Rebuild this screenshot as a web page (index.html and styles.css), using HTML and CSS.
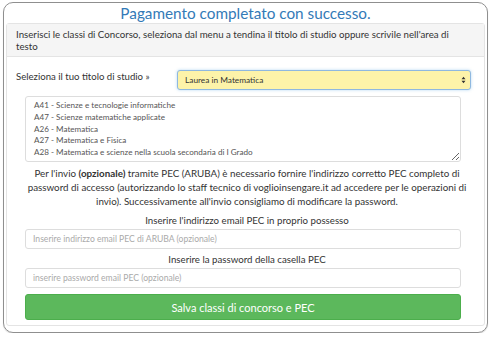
FILE: index.html
```html
<!DOCTYPE html>
<html lang="it">
<head>
  <meta charset="UTF-8" />
  <title>Pagamento completato</title>
  <link rel="stylesheet" href="styles.css">
</head>
<body>
  <div class="frame">
    <h2 class="title">Pagamento completato con successo.</h2>

    <div class="panel">
      <div class="panel-heading">
        Inserisci le classi di Concorso, seleziona dal menu a tendina il titolo di studio oppure scrivile nell'area di testo
      </div>

      <div class="panel-body">
        <div class="select-row">
          <label class="select-label">Seleziona il tuo titolo di studio &raquo;</label>
          <div class="select-box">
            <span>Laurea in Matematica</span>
            <svg class="arrows" width="5" height="8" viewBox="0 0 5 8">
              <path d="M0.5 3.2 L2.5 0.8 L4.5 3.2 Z M0.5 4.8 L2.5 7.2 L4.5 4.8 Z" fill="#333"/>
            </svg>
          </div>
        </div>

        <div class="form-block">
          <textarea class="classes">A41 - Scienze e tecnologie informatiche
A47 - Scienze matematiche applicate
A26 - Matematica
A27 - Matematica e Fisica
A28 - Matematica e scienze nella scuola secondaria di I Grado</textarea>

          <p class="note">
            Per l'invio <b>(opzionale)</b> tramite PEC (ARUBA) è necessario fornire l'indirizzo corretto PEC completo di password di accesso (autorizzando lo staff tecnico di voglioinsengare.it ad accedere per le operazioni di invio). Successivamente all'invio consigliamo di modificare la password.
          </p>

          <p class="field-label">Inserire l'indirizzo email PEC in proprio possesso</p>
          <input class="field" type="text" placeholder="Inserire indirizzo email PEC di ARUBA (opzionale)">

          <p class="field-label second">Inserire la password della casella PEC</p>
          <input class="field" type="text" placeholder="inserire password email PEC (opzionale)">

          <button class="btn-save">Salva classi di concorso e PEC</button>
        </div>
      </div>
    </div>
  </div>
</body>
</html>
```

FILE: styles.css
```css
* {
  margin: 0;
  padding: 0;
  box-sizing: border-box;
}

body {
  font-family: Lato, 'Open Sans', sans-serif;
  color: #333;
  background: #fff;
  padding: 2px 3px 0;
}

/* outer rounded box */
.frame {
  border: 1px solid #8f8f8f;
  border-radius: 10px;
  height: 331px;
  padding: 0 2px;
  box-shadow: 0 1px 1px rgba(0, 0, 0, 0.15);
}

.title {
  font-size: 15.3px;
  font-weight: normal;
  line-height: 20px;
  color: #337ab7;
  text-align: center;
}

.panel {
  border: 1px solid #e4e4e4;
  border-radius: 3px;
  height: 303px;
}

.panel-heading {
  background: #f5f5f5;
  border-bottom: 1px solid #e4e4e4;
  font-size: 9.7px;
  line-height: 11.5px;
  padding: 5px 26px 5px 9px;
  height: 33px;
}

.panel-body {
  padding: 13px 0 0;
}

.select-row {
  display: flex;
  align-items: flex-start;
  padding: 0 13px 0 9px;
}

.select-label {
  font-size: 9.6px;
  line-height: 14px;
  width: 161px;
}

.select-box {
  flex: 1;
  height: 20px;
  background: #fdf3a9;
  border: 1px solid #8fb8e0;
  border-radius: 3px;
  box-shadow: 0 0 3px rgba(102, 175, 233, 0.5);
  display: flex;
  align-items: center;
  justify-content: space-between;
  padding: 0 4px 0 7px;
  font-size: 8.3px;
}

.form-block {
  width: 436px;
  margin: 6px 0 0 18px;
}

.classes {
  display: block;
  width: 100%;
  height: 66px;
  border: 1px solid #ddd;
  border-radius: 3px;
  font-family: Lato, 'Open Sans', sans-serif;
  font-size: 8.1px;
  line-height: 11.8px;
  color: #555;
  padding: 3px 8px;
  resize: vertical;
  overflow: hidden;
}

/* texts centred on the whole panel, wider than the inputs */
.note,
.field-label {
  width: 462px;
  margin-left: -9px;
  text-align: center;
  line-height: 14px;
}

.note {
  font-size: 9.8px;
  margin-top: 4px;
}

.field-label {
  font-size: 9.7px;
  margin-top: 5px;
}

.field-label.second {
  margin-top: 3px;
}

.field {
  display: block;
  width: 100%;
  height: 20px;
  border: 1px solid #ddd;
  border-radius: 3px;
  font-family: Lato, 'Open Sans', sans-serif;
  font-size: 8.6px;
  padding: 0 7px;
  margin-top: 2px;
}

.field::placeholder {
  color: #aaa;
}

.btn-save {
  display: block;
  width: 100%;
  height: 26px;
  margin-top: 6px;
  border: 1px solid #4cae4c;
  border-radius: 3px;
  background: #5cb85c;
  color: #fff;
  font-family: Lato, 'Open Sans', sans-serif;
  font-size: 11px;
}
```
